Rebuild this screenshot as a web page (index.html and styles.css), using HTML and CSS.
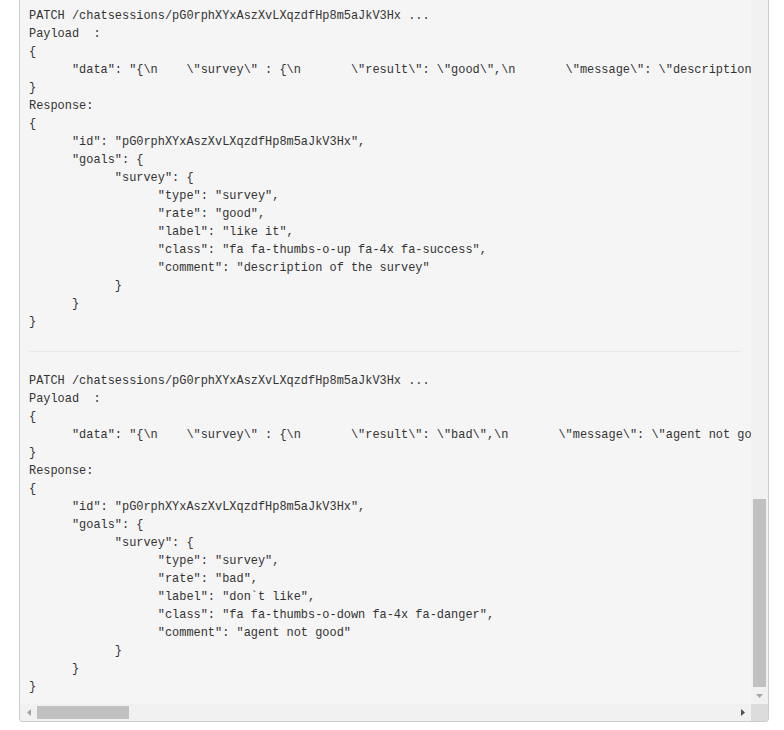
FILE: index.html
```html
<!DOCTYPE html>
<html lang="en">
<head>
<meta charset="utf-8">
<title>Chat session log</title>
<link rel="stylesheet" href="styles.css">
</head>
<body>
<div class="panel">
  <div class="viewport">
<pre class="log">PATCH /chatsessions/pG0rphXYxAszXvLXqzdfHp8m5aJkV3Hx ...
Payload  :
{
      "data": "{\n    \"survey\" : {\n       \"result\": \"good\",\n       \"message\": \"description of the survey\"\n    }\n}"
}
Response:
{
      "id": "pG0rphXYxAszXvLXqzdfHp8m5aJkV3Hx",
      "goals": {
            "survey": {
                  "type": "survey",
                  "rate": "good",
                  "label": "like it",
                  "class": "fa fa-thumbs-o-up fa-4x fa-success",
                  "comment": "description of the survey"
            }
      }
}</pre>
<hr class="sep">
<pre class="log">PATCH /chatsessions/pG0rphXYxAszXvLXqzdfHp8m5aJkV3Hx ...
Payload  :
{
      "data": "{\n    \"survey\" : {\n       \"result\": \"bad\",\n       \"message\": \"agent not good\"\n    }\n}"
}
Response:
{
      "id": "pG0rphXYxAszXvLXqzdfHp8m5aJkV3Hx",
      "goals": {
            "survey": {
                  "type": "survey",
                  "rate": "bad",
                  "label": "don`t like",
                  "class": "fa fa-thumbs-o-down fa-4x fa-danger",
                  "comment": "agent not good"
            }
      }
}</pre>
  </div>
  <div class="vbar">
    <div class="track"></div>
    <div class="vthumb"></div>
    <div class="btn"><svg width="7" height="4" viewBox="0 0 7 4"><path d="M0 0H7L3.5 4Z" fill="#a3a3a3"/></svg></div>
  </div>
  <div class="hbar">
    <div class="btn"><svg width="4" height="7" viewBox="0 0 4 7"><path d="M4 0V7L0 3.5Z" fill="#a3a3a3"/></svg></div>
    <div class="hthumb"></div>
    <div class="track"></div>
    <div class="btn"><svg width="4" height="7" viewBox="0 0 4 7"><path d="M0 0L4 3.5L0 7Z" fill="#505050"/></svg></div>
  </div>
  <div class="corner"></div>
</div>
</body>
</html>
```
FILE: styles.css
```css
html, body {
  margin: 0;
  padding: 0;
  background: #ffffff;
}

.panel {
  margin-left: 19px;
  width: 750px;
  box-sizing: border-box;
  display: grid;
  grid-template-columns: 731px 17px;
  grid-template-rows: 704px 17px;
  border: 1px solid #cccccc;
  border-top: none;
  border-radius: 0 0 4px 4px;
  background: #f5f5f5;
  overflow: hidden;
}

.viewport {
  overflow: hidden;
  min-width: 0;
  padding: 7px 10px 8px 9px;
}

.log {
  margin: 0;
  font-family: "Liberation Mono", "DejaVu Sans Mono", monospace;
  font-size: 11.93px;
  line-height: 18px;
  color: #333333;
  white-space: pre;
}

.sep {
  margin: 20px 0;
  height: 0;
  border: 0;
  border-top: 1px solid #e8e8e8;
}

.vbar {
  display: flex;
  flex-direction: column;
  background: #f1f1f1;
}

.hbar {
  display: flex;
  background: #f1f1f1;
}

.track {
  flex: 1;
}

.vthumb {
  height: 188px;
  margin: 0 2px;
  background: #c1c1c1;
}

.hthumb {
  width: 92px;
  margin: 2px 0;
  background: #c1c1c1;
}

.btn {
  width: 17px;
  height: 17px;
  flex: none;
  display: flex;
  align-items: center;
  justify-content: center;
}

.btn svg {
  display: block;
}

.corner {
  background: #dcdcdc;
}
```
